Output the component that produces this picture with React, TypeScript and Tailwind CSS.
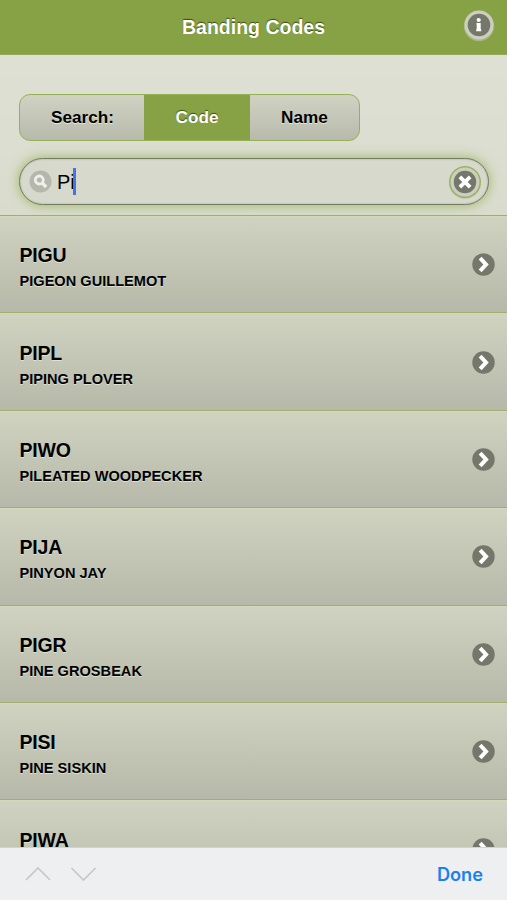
const birds = [
  ['PIGU', 'PIGEON GUILLEMOT'],
  ['PIPL', 'PIPING PLOVER'],
  ['PIWO', 'PILEATED WOODPECKER'],
  ['PIJA', 'PINYON JAY'],
  ['PIGR', 'PINE GROSBEAK'],
  ['PISI', 'PINE SISKIN'],
  ['PIWA', ''],
];

function Arrow() {
  return (
    <svg className="mt-[1px] mr-[12px] shrink-0" width="23" height="23" viewBox="0 0 23 23" fill="none">
      <circle cx="11.5" cy="11.5" r="11.2" fill="#74776a" />
      <path d="M9.5 6.7 14 11.5 9.5 16.3" stroke="#fff" strokeWidth="4" strokeLinecap="square" />
    </svg>
  );
}

function Header() {
  return (
    <header className="flex h-[55px] shrink-0 items-center border-b border-[#91ab58] bg-[#87a244]">
      <div className="w-[51px]" />
      <h1 className="flex-1 text-center text-[19.5px] leading-[24px] font-bold text-white [text-shadow:0_-1px_1px_#3c4a1a]">
        Banding Codes
      </h1>
      <div className="flex w-[51px] justify-center pr-[5px] pb-[5px]">
        <svg className="overflow-visible" width="30" height="30" viewBox="0 0 30 30">
          <circle cx="15" cy="16" r="15.2" fill="#a9b67f" />
          <circle cx="15" cy="15" r="14.5" fill="#cccfc0" />
          <circle cx="15" cy="15" r="11.3" fill="#74776a" />
          <circle cx="14.7" cy="10" r="2.1" fill="#fff" />
          <path d="M12.5 13h4.2v6.3h.5v1.9h-5v-1.9h.5v-4.5h-.2z" fill="#fff" />
        </svg>
      </div>
    </header>
  );
}

function SearchPanel() {
  return (
    <section className="h-[160px] shrink-0 bg-gradient-to-b from-[#dee0d4] to-[#d9dccd] px-[19px] pt-[39px]">
      <div className="flex h-[47px] w-[341px] overflow-hidden rounded-[11px] border border-[#97b058] bg-gradient-to-b from-[#d0d3c4] to-[#b8bbab] text-[17.2px] font-bold text-black">
        <div className="flex w-[124px] items-center justify-center pl-px [text-shadow:0_1px_0_#e6e8dd]">Search:</div>
        <div className="flex w-[106px] items-center justify-center bg-[#87a244] text-white [text-shadow:0_-1px_1px_#3c4a1a]">
          Code
        </div>
        <div className="flex flex-1 items-center justify-center [text-shadow:0_1px_0_#e6e8dd]">Name</div>
      </div>
      <div className="mt-[17px] flex h-[47px] w-[470px] items-center rounded-full border border-[#757a65] bg-[#d7d9cc] pr-[7px] pl-[9px] shadow-[0_0_12px_#9fb460,inset_0_0_2px_#a4a895]">
        <svg width="23" height="23" viewBox="0 0 23 23" fill="none">
          <circle cx="11.5" cy="11.5" r="11" fill="#b5b7ac" />
          <circle cx="10.3" cy="10" r="4" stroke="#eeefe9" strokeWidth="2.8" />
          <path d="m13.4 13.2 3.800 3.800" stroke="#eeefe9" strokeWidth="3.4" />
        </svg>
        <span className="ml-[5px] text-[20px] leading-[24px] tracking-[-0.2px] text-black">Pi</span>
        <span className="-ml-px h-[27px] w-[2.5px] bg-[#4472e8]" />
        <svg className="ml-auto overflow-visible" width="32" height="32" viewBox="0 0 32 32" fill="none">
          <circle cx="16" cy="17" r="16" fill="#b2b5a3" opacity=".6" />
          <circle cx="16" cy="16" r="15.2" fill="#cccfc0" stroke="#9cb362" strokeWidth="1.5" />
          <circle cx="16" cy="16" r="11.2" fill="#74776a" />
          <path d="m12.200 12.200 7.600 7.600m0-7.600-7.600 7.600" stroke="#fff" strokeWidth="3.8" strokeLinecap="square" />
        </svg>
      </div>
    </section>
  );
}

export default function App() {
  return (
    <div className="flex h-[900px] w-[507px] flex-col overflow-hidden bg-[#dddfd3] font-['Liberation_Sans',Arial,sans-serif]">
      <Header />
      <SearchPanel />
      <main className="min-h-0 flex-1 overflow-hidden">
        {birds.map(([code, name]) => (
          <div
            key={code}
            className="flex h-[97.4px] items-center border-t border-[#a0af6c] bg-gradient-to-b from-[#d0d3c0] to-[#b6b9a9] pl-[19.5px] shadow-[inset_0_1px_0_#d3d8bb]"
          >
            <div className="flex-1 pt-[8px] text-black [text-shadow:0_1px_0_#dfe1d5]">
              <h2 className="text-[19.5px] leading-[26px] font-bold tracking-[-0.2px]">{code}</h2>
              <p className="h-[26px] text-[14.6px] leading-[26px] font-bold">{name}</p>
            </div>
            <Arrow />
          </div>
        ))}
      </main>
      <footer className="flex h-[53px] shrink-0 items-center border-t border-[#d3d4d1] bg-[#eeeff1] pr-[24px] pl-[25px]">
        <svg width="72" height="16" viewBox="0 0 72 16" fill="none" stroke="#c7c8ca" strokeWidth="1.7">
          <path d="M1 14 13 2l12 12M46.5 2l12 12 12-12" />
        </svg>
        <span className="ml-auto font-['Inter',sans-serif] text-[18.2px] leading-[24px] font-semibold text-[#1a80f0]">
          Done
        </span>
      </footer>
    </div>
  );
}
